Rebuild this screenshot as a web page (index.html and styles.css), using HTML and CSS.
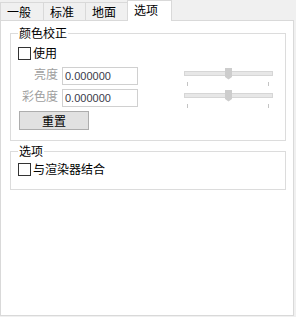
FILE: index.html
```
<!DOCTYPE html>
<html lang="zh-CN">
<head>
<meta charset="utf-8">
<title>选项</title>
<link rel="stylesheet" href="styles.css">
</head>
<body>
<div class="tabs">
  <div class="tab first">一般</div>
  <div class="tab">标准</div>
  <div class="tab third">地面</div>
  <div class="tab active">选项</div>
</div>
<div class="panel">
  <fieldset class="group g1">
    <legend>颜色校正</legend>
    <div class="check"><span class="box"></span>使用</div>
    <div class="row">
      <span class="lbl">亮度</span>
      <span class="input">0.000000</span>
      <svg class="slider" width="89" height="18" viewBox="0 0 89 18">
        <rect x="0.5" y="4.5" width="88" height="4" fill="#e7e7e7" stroke="#d6d6d6"/>
        <polygon points="41,1 48,1 48,10 44.5,12.5 41,10" fill="#cdcdcd"/>
        <rect x="3" y="15" width="1" height="4" fill="#c4c4c4"/>
        <rect x="84" y="15" width="1" height="4" fill="#c4c4c4"/>
      </svg>
    </div>
    <div class="row">
      <span class="lbl">彩色度</span>
      <span class="input">0.000000</span>
      <svg class="slider" width="89" height="18" viewBox="0 0 89 18">
        <rect x="0.5" y="4.5" width="88" height="4" fill="#e7e7e7" stroke="#d6d6d6"/>
        <polygon points="41,1 48,1 48,10 44.5,12.5 41,10" fill="#cdcdcd"/>
        <rect x="3" y="15" width="1" height="4" fill="#c4c4c4"/>
        <rect x="84" y="15" width="1" height="4" fill="#c4c4c4"/>
      </svg>
    </div>
    <button class="btn" type="button">重置</button>
  </fieldset>
  <fieldset class="group g2">
    <legend>选项</legend>
    <div class="check"><span class="box"></span>与渲染器结合</div>
  </fieldset>
</div>
</body>
</html>
```
FILE: styles.css
```
html, body {
  margin: 0;
  padding: 0;
}
body {
  background: #f0f0f0;
  width: 296px;
  height: 317px;
  font-family: "Noto Sans CJK SC", sans-serif;
  font-size: 12px;
  line-height: 14px;
  color: #000;
}
.tabs {
  display: flex;
  align-items: flex-start;
  height: 20px;
}
.tab {
  box-sizing: border-box;
  height: 18px;
  margin-top: 2px;
  padding: 2px 0 0 6px;
  border-top: 1px solid #d9d9d9;
  border-right: 1px solid #d9d9d9;
  background: #f0f0f0;
  width: 42px;
}
.tab.first {
  border-left: 1px solid #d9d9d9;
  width: 44px;
}
.tab.third {
  border-right: none;
  width: 41px;
}
.tab.active {
  position: relative;
  z-index: 1;
  height: 21px;
  margin-top: 0;
  width: 45px;
  border-left: 1px solid #d9d9d9;
  background: #fff;
}
.panel {
  box-sizing: border-box;
  width: 294px;
  height: 296px;
  border: 1px solid #d9d9d9;
  background: #fff;
  padding: 5px 7px 0 9px;
}
.group {
  margin: 0;
  min-width: 0;
  border: 1px solid #dcdcdc;
  padding: 0 7px 10px 7px;
}
.group legend {
  padding: 0 1px;
  line-height: 13px;
  height: 14px;
}
.g2 {
  margin-top: 3px;
  height: 46px;
  box-sizing: border-box;
}
.check {
  display: flex;
  align-items: center;
  height: 14px;
}
.g1 .check {
  margin-top: 6px;
}
.g2 .check {
  margin-top: 4px;
}
.box {
  box-sizing: border-box;
  width: 13px;
  height: 13px;
  border: 1px solid #333;
  background: #fff;
  margin-right: 2px;
}
.row {
  display: flex;
  align-items: flex-start;
  height: 18px;
  margin-top: 4px;
}
.g1 .check + .row {
  margin-top: 7px;
}
.lbl {
  width: 40px;
  text-align: right;
  color: #a0a0a0;
  margin-right: 4px;
}
.input {
  box-sizing: border-box;
  width: 76px;
  height: 18px;
  border: 1px solid #d0d0d0;
  padding-left: 2px;
  font-family: "Liberation Sans", sans-serif;
  font-size: 11px;
  line-height: 16px;
  color: #3a3a4a;
}
.slider {
  margin-left: 46px;
  overflow: visible;
  display: block;
}
.btn {
  display: block;
  box-sizing: border-box;
  margin: 4px 0 0 1px;
  width: 70px;
  height: 19px;
  padding: 0;
  border: 1px solid #adadad;
  background: #e1e1e1;
  font-family: "Noto Sans CJK SC", sans-serif;
  font-size: 12px;
  line-height: 16px;
  color: #000;
}
```
